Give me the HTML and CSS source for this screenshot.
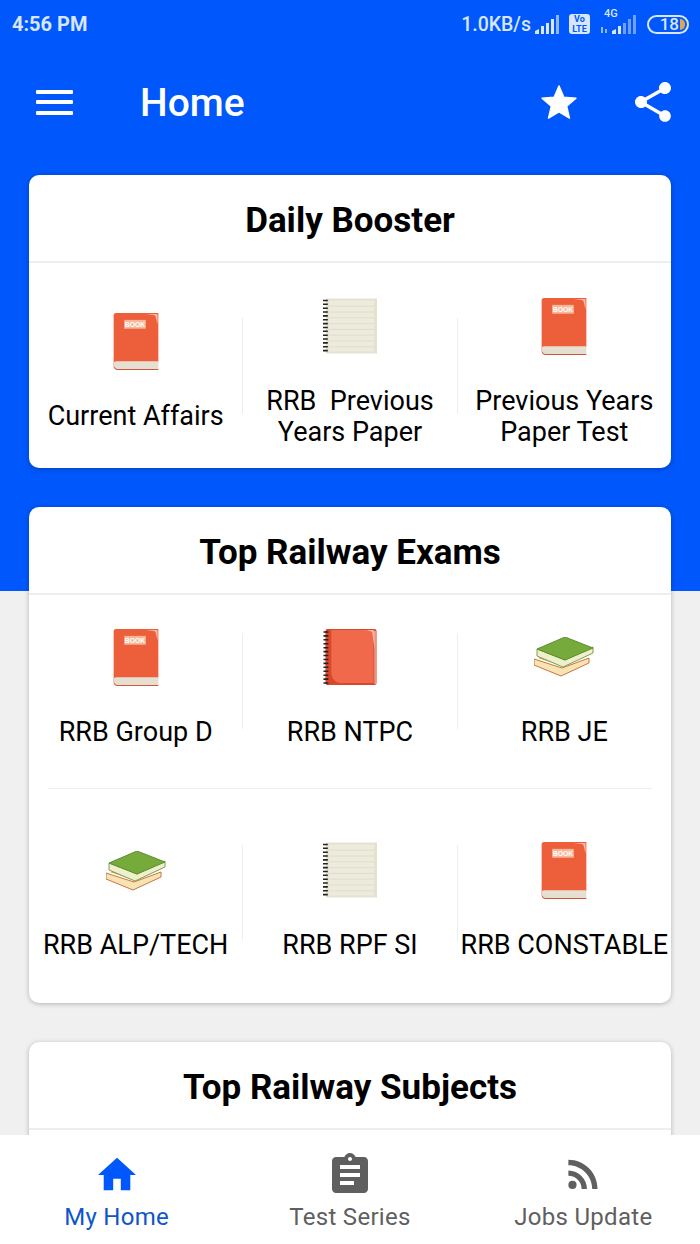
FILE: index.html
```html
<!DOCTYPE html>
<html lang="en">
<head>
    <meta charset="UTF-8">
    <meta name="viewport" content="width=device-width, initial-scale=1.0">
    <title>Home</title>
    <link rel="stylesheet" href="styles.css">
</head>
<body>

    <!-- shared pictures for the list items -->
    <svg class="defs" width="0" height="0">
        <symbol id="book" viewBox="0 0 46 58">
            <path d="M3 0H46V50H7C4 50 2 52 2 54L0 52V3C0 1 1 0 3 0Z" fill="#ec5f3a"/>
            <path d="M0 51C0 49 3 49 7 49H46V57H6C2 57 0 55 0 51Z" fill="#e6dfd1"/>
            <path d="M0 50C0 55 2 57 6 57H46V58H5C1 58 -1 55 0 50Z" fill="#c8583a"/>
            <path d="M33 1H44C45 1 45 2 45 3V12L43 4C43 3 42 2 41 2Z" fill="#f8b9a0"/>
            <rect x="11" y="7" width="22" height="9" fill="#f6b898"/>
        </symbol>
        <symbol id="notes" viewBox="0 0 56 58">
            <rect x="3" y="0" width="53" height="57" fill="#e5e1d1"/>
            <rect x="6" y="2" width="47" height="53" fill="#ecebdc"/>
            <g stroke="#e0ddcc" stroke-width="1">
                <path d="M6 8H53M6 14H53M6 20H53M6 26H53M6 32H53M6 38H53M6 44H53M6 50H53"/>
            </g>
            <g stroke="#222" stroke-width="1.6">
                <path d="M0 2H5M0 6H5M0 10H5M0 14H5M0 18H5M0 22H5M0 26H5M0 30H5M0 34H5M0 38H5M0 42H5M0 46H5M0 50H5M0 54H5"/>
            </g>
        </symbol>
        <symbol id="notebook" viewBox="0 0 54 58">
            <rect x="2" y="0" width="52" height="57" rx="2" fill="#d9472c"/>
            <path d="M8 1H48C50 1 51 2 51 4V55H18C12 55 8 50 8 44Z" fill="#f0694a"/>
            <path d="M44 1H50C52 1 52 2 52 4V20L50 6C50 3 49 2 47 2Z" fill="#f8b9a0"/>
            <rect x="52" y="2" width="1" height="54" fill="#f6d5c8"/>
            <g stroke="#222" stroke-width="1.6">
                <path d="M0 3H5M0 7H5M0 11H5M0 15H5M0 19H5M0 23H5M0 27H5M0 31H5M0 35H5M0 39H5M0 43H5M0 47H5M0 51H5M0 55H5"/>
            </g>
        </symbol>
        <symbol id="stack" viewBox="0 0 60 40">
            <path d="M0 22L28 31L55 21V26L27 39L0 28Z" fill="#f7e3b5" stroke="#c9763a" stroke-width="1"/>
            <path d="M4 21L28 29L50 20L30 14Z" fill="#d9933f"/>
            <path d="M3 12V19L29 30L59 16V10L31 23Z" fill="#eef0cb" stroke="#7d9f55" stroke-width="1"/>
            <path d="M3 12L31 0L59 11L31 23Z" fill="#76ab3c" stroke="#5f8f30" stroke-width="1"/>
        </symbol>
    </svg>

    <div class="page">
        <div class="status-bar">
            <span class="time">4:56 PM</span>
            <div class="status-right">
                <span class="speed">1.0KB/s</span>
                <svg class="signal" width="26" height="20" viewBox="0 0 26 20">
                    <path d="M1 20V17L5 15V20ZM7 20V12H10V20ZM12 20V9H15V20ZM17 20V5H20V20Z" fill="#d8e7ff"/>
                    <path d="M22 20V1H25V20Z" fill="#8fb6ff"/>
                </svg>
                <span class="volte">Vo<br>LTE</span>
                <div class="net">
                    <span class="net-label">4G</span>
                    <svg width="36" height="20" viewBox="0 0 36 20">
                        <path d="M0 19V13H2V19ZM4 19V15H6V19Z" fill="#8fb6ff"/>
                        <path d="M11 20V17L15 15V20ZM17 20V12H20V20Z" fill="#d8e7ff"/>
                        <path d="M22 20V9H25V20ZM27 20V5H30V20ZM32 20V1H35V20Z" fill="#6f9fff"/>
                    </svg>
                </div>
                <div class="battery">
                    <span>18</span>
                    <i class="battery-level"></i>
                </div>
            </div>
        </div>

        <header class="toolbar">
            <button class="menu-btn" aria-label="Menu">
                <span></span><span></span><span></span>
            </button>
            <h1>Home</h1>
            <svg class="star" viewBox="1.5 1.5 21 20"><path d="M12 17.27L18.18 21l-1.64-7.03L22 9.24l-7.19-.61L12 2 9.19 8.63 2 9.24l5.46 4.73L5.82 21z"/></svg>
            <svg class="share" viewBox="3 2 18 20"><path d="M18 16.08c-.76 0-1.44.3-1.96.77L8.91 12.7c.05-.23.09-.46.09-.7s-.04-.47-.09-.7l7.05-4.11c.54.5 1.25.81 2.04.81 1.66 0 3-1.34 3-3s-1.34-3-3-3-3 1.34-3 3c0 .24.04.47.09.7L8.04 9.81C7.5 9.31 6.79 9 6 9c-1.66 0-3 1.34-3 3s1.34 3 3 3c.79 0 1.5-.31 2.04-.81l7.12 4.16c-.05.21-.08.43-.08.65 0 1.61 1.31 2.92 2.92 2.92 1.61 0 2.92-1.31 2.92-2.92s-1.31-2.92-2.92-2.92z"/></svg>
        </header>

        <main class="content">
            <section class="card">
                <h2>Daily Booster</h2>
                <div class="row row-daily">
                    <a class="item">
                        <svg class="pic pic-book" viewBox="0 0 46 58"><use href="#book"/><text x="22" y="14.5" text-anchor="middle" class="book-text">BOOK</text></svg>
                        <span>Current Affairs</span>
                    </a>
                    <i class="vline"></i>
                    <a class="item">
                        <svg class="pic pic-notes"><use href="#notes"/></svg>
                        <span>RRB&nbsp; Previous Years Paper</span>
                    </a>
                    <i class="vline"></i>
                    <a class="item">
                        <svg class="pic pic-book" viewBox="0 0 46 58"><use href="#book"/><text x="22" y="14.5" text-anchor="middle" class="book-text">BOOK</text></svg>
                        <span>Previous Years Paper Test</span>
                    </a>
                </div>
            </section>

            <section class="card">
                <h2>Top Railway Exams</h2>
                <div class="row row-first">
                    <a class="item">
                        <svg class="pic pic-book" viewBox="0 0 46 58"><use href="#book"/><text x="22" y="14.5" text-anchor="middle" class="book-text">BOOK</text></svg>
                        <span>RRB Group D</span>
                    </a>
                    <i class="vline"></i>
                    <a class="item">
                        <svg class="pic pic-notes"><use href="#notebook"/></svg>
                        <span>RRB NTPC</span>
                    </a>
                    <i class="vline"></i>
                    <a class="item">
                        <div class="pic pic-box"><svg class="pic-stack"><use href="#stack"/></svg></div>
                        <span>RRB JE</span>
                    </a>
                </div>
                <hr class="hline">
                <div class="row row-second">
                    <a class="item">
                        <div class="pic pic-box"><svg class="pic-stack"><use href="#stack"/></svg></div>
                        <span class="nowrap">RRB ALP/TECH</span>
                    </a>
                    <i class="vline"></i>
                    <a class="item">
                        <svg class="pic pic-notes"><use href="#notes"/></svg>
                        <span>RRB RPF SI</span>
                    </a>
                    <i class="vline"></i>
                    <a class="item">
                        <svg class="pic pic-book" viewBox="0 0 46 58"><use href="#book"/><text x="22" y="14.5" text-anchor="middle" class="book-text">BOOK</text></svg>
                        <span class="nowrap">RRB CONSTABLE</span>
                    </a>
                </div>
            </section>

            <section class="card">
                <h2>Top Railway Subjects</h2>
                <div class="row row-first"></div>
            </section>
        </main>

        <nav class="bottom-nav">
            <a class="tab active">
                <svg class="tab-icon icon-home" viewBox="2 3 20 17"><path d="M10 20v-6h4v6h5v-8h3L12 3 2 12h3v8z"/></svg>
                <span>My Home</span>
            </a>
            <a class="tab">
                <svg class="tab-icon icon-test" viewBox="3 1 18 20"><path d="M19 3h-4.18C14.4 1.84 13.3 1 12 1s-2.4.84-2.82 2H5c-1.1 0-2 .9-2 2v14c0 1.1.9 2 2 2h14c1.1 0 2-.9 2-2V5c0-1.1-.9-2-2-2zm-7 0c.55 0 1 .45 1 1s-.45 1-1 1-1-.45-1-1 .45-1 1-1zm2 14H7v-2h7v2zm3-4H7v-2h10v2zm0-4H7V7h10v2z"/></svg>
                <span>Test Series</span>
            </a>
            <a class="tab">
                <svg class="tab-icon icon-jobs" viewBox="4 4 15.6 16"><circle cx="6.18" cy="17.82" r="2.18"/><path d="M4 4.44v2.83c7.03 0 12.73 5.7 12.73 12.73h2.83c0-8.59-6.97-15.56-15.56-15.56zm0 5.66v2.83c3.9 0 7.07 3.17 7.07 7.07h2.83c0-5.47-4.43-9.9-9.9-9.9z"/></svg>
                <span>Jobs Update</span>
            </a>
        </nav>
    </div>

</body>
</html>
```

FILE: styles.css
```css
* {
    box-sizing: border-box;
}

body {
    margin: 0;
    font-family: Roboto, "Liberation Sans", sans-serif;
    color: #000;
}

.defs {
    display: block;
}

.book-text {
    font-size: 7px;
    font-weight: bold;
    fill: #fff;
    font-family: "Liberation Sans", sans-serif;
}

.page {
    display: flex;
    flex-direction: column;
    height: 1244px;
    overflow: hidden;
    background: linear-gradient(#0057fb 591px, #f0f0f0 591px);
}

/* status bar */
.status-bar {
    display: flex;
    justify-content: space-between;
    align-items: center;
    height: 48px;
    padding: 0 11px 0 12px;
    color: #d8e7ff;
    font-size: 20px;
    font-weight: 700;
}

.status-right {
    display: flex;
    align-items: center;
    font-size: 19.5px;
    font-weight: 500;
}

.signal {
    margin: 0 9px 0 3px;
}

.volte {
    width: 21px;
    height: 20px;
    border-radius: 3px;
    background: #d8e7ff;
    color: #0057fb;
    font-size: 9px;
    font-weight: 700;
    line-height: 10px;
    text-align: center;
    margin-right: 11px;
}

.net {
    position: relative;
    width: 36px;
    height: 20px;
    margin-right: 10px;
}

.net-label {
    position: absolute;
    top: -7px;
    left: 3px;
    font-size: 11px;
}

.battery {
    display: flex;
    align-items: center;
    justify-content: flex-end;
    width: 42px;
    height: 19px;
    border: 2px solid #d8e7ff;
    border-radius: 10px;
    padding-right: 2px;
    font-size: 17px;
}

.battery-level {
    width: 5px;
    height: 11px;
    background: #e0a458;
    border-radius: 0 5px 5px 0;
    margin-left: 1px;
}

/* toolbar */
.toolbar {
    display: flex;
    align-items: center;
    height: 108px;
    padding: 0 29px 0 36px;
    color: #fff;
}

.menu-btn {
    display: flex;
    flex-direction: column;
    justify-content: space-between;
    width: 37px;
    height: 25px;
    padding: 0;
    border: none;
    background: none;
}

.menu-btn span {
    height: 4px;
    background: #fff;
    border-radius: 1px;
}

.toolbar h1 {
    flex: 1;
    margin: 2px 0 0 67px;
    font-size: 39px;
    font-weight: 500;
}

.star {
    width: 36px;
    height: 34px;
    fill: #fff;
    stroke: #fff;
    stroke-linejoin: round;
    stroke-width: 0.8;
    margin: 0 58px 1px 0;
}

.share {
    width: 36px;
    height: 40px;
    fill: #fff;
}

/* cards */
.content {
    flex: 1;
    min-height: 0;
    overflow: hidden;
    padding: 19px 29px 0;
}

.card {
    background: white;
    border-radius: 10px;
    box-shadow: 0 1px 5px rgba(0, 0, 0, 0.25);
    margin-bottom: 39px;
}

.card h2 {
    height: 88px;
    margin: 0;
    border-bottom: 2px solid #eee;
    font-size: 35px;
    font-weight: 700;
    line-height: 91px;
    text-align: center;
}

.row {
    display: flex;
    align-items: center;
}

.row-daily {
    height: 205px;
}

.row-first {
    height: 193px;
    padding-bottom: 21px;
}

.row-second {
    height: 214px;
    padding-bottom: 3px;
}

.row-second .vline {
    margin-bottom: 3px;
}

.hline {
    height: 1px;
    margin: 0 19px;
    border: none;
    background: #eee;
}

.vline {
    flex: none;
    width: 1px;
    height: 96px;
    background: #eee;
}

.item {
    flex: 1;
    min-width: 0;
    display: flex;
    flex-direction: column;
    align-items: center;
    padding: 14px 6px 0;
    font-size: 27px;
    line-height: 31px;
    text-align: center;
}

.nowrap {
    white-space: nowrap;
}

.pic {
    display: block;
    height: 57px;
    margin: 0 0 31px;
}

.pic-book {
    width: 46px;
}

.pic-notes {
    width: 54px;
}

.pic-box {
    display: flex;
    align-items: center;
    justify-content: center;
}

.pic-stack {
    width: 60px;
    height: 40px;
}

/* bottom nav */
.bottom-nav {
    flex: none;
    display: flex;
    height: 109px;
    background: white;
}

.tab {
    flex: 1;
    display: flex;
    flex-direction: column;
    align-items: center;
    height: 100%;
    padding-top: 18px;
    color: #5f5f5f;
    fill: #5f5f5f;
    font-size: 24px;
    letter-spacing: 0.3px;
}

.tab.active {
    color: #0f56c8;
    fill: #0057fb;
}

.tab-icon {
    height: 40px;
    width: 38px;
    margin-bottom: 10px;
}

.icon-home {
    padding: 3px 0 1px;
}

.icon-jobs {
    padding: 6px 4px 4px;
}
```
